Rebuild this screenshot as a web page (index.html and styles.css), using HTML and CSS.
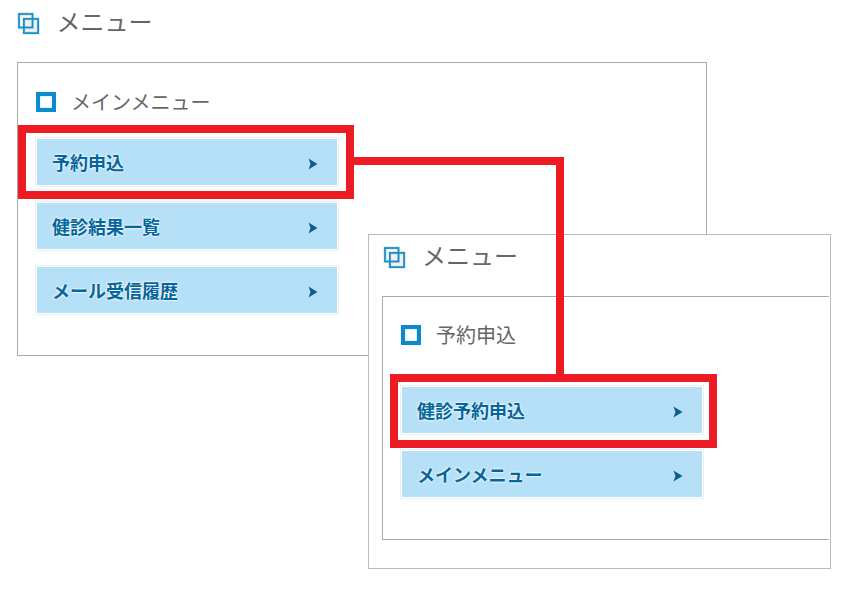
FILE: index.html
```html
<!DOCTYPE html>
<html lang="ja">
<head>
<meta charset="utf-8">
<title>メニュー</title>
<link rel="stylesheet" href="styles.css">
</head>
<body>
<svg class="sprites" width="0" height="0" aria-hidden="true">
  <symbol id="windows" viewBox="0 0 24 24">
    <path d="M7 7H21V21H7z" fill="#e8e8e8" opacity=".6"/>
    <rect x="2" y="2" width="13.5" height="13.5" fill="none" stroke="#dedede" stroke-width="3.2"/>
    <rect x="6.9" y="6.9" width="14.2" height="14.2" fill="none" stroke="#dedede" stroke-width="3.2"/>
    <rect x="2" y="2" width="13.5" height="13.5" fill="none" stroke="#0d8fce" stroke-width="1.7"/>
    <rect x="6.9" y="6.9" width="14.2" height="14.2" fill="none" stroke="#0d8fce" stroke-width="1.7"/>
  </symbol>
  <symbol id="arrow" viewBox="0 0 10 12">
    <path d="M.5 .5 9.5 6 .5 11.5 2.5 6z" fill="#0b5f8c"/>
  </symbol>
</svg>

<section class="window window-main">
  <header class="window-title">
    <svg class="title-icon"><use href="#windows"/></svg>
    <h1>メニュー</h1>
  </header>
  <div class="panel panel-main">
    <h2 class="panel-title"><span class="square"></span>メインメニュー</h2>
    <ul class="menu">
      <li><a class="menu-item">予約申込<svg class="arrow"><use href="#arrow"/></svg></a></li>
      <li><a class="menu-item">健診結果一覧<svg class="arrow"><use href="#arrow"/></svg></a></li>
      <li><a class="menu-item">メール受信履歴<svg class="arrow"><use href="#arrow"/></svg></a></li>
    </ul>
  </div>
</section>

<section class="window window-sub">
  <header class="window-title">
    <svg class="title-icon"><use href="#windows"/></svg>
    <h1>メニュー</h1>
  </header>
  <div class="panel panel-sub">
    <h2 class="panel-title"><span class="square"></span>予約申込</h2>
    <ul class="menu">
      <li><a class="menu-item">健診予約申込<svg class="arrow"><use href="#arrow"/></svg></a></li>
      <li><a class="menu-item">メインメニュー<svg class="arrow"><use href="#arrow"/></svg></a></li>
    </ul>
  </div>
</section>

<div class="mark mark-one"></div>
<div class="mark mark-two"></div>
<div class="link link-h"></div>
<div class="link link-v"></div>
</body>
</html>
```
FILE: styles.css
```css
* { box-sizing: border-box; }
html, body { margin: 0; padding: 0; }
body {
  position: relative;
  width: 857px;
  height: 591px;
  overflow: hidden;
  background: #fff;
  font-family: "Noto Sans CJK JP", "Noto Sans", sans-serif;
  color: #666;
}
.sprites { position: absolute; }

.window { position: absolute; background: #fff; }
.window-main { left: 0; top: 0; width: 707px; height: 356px; }
.window-sub {
  left: 368px; top: 234px; width: 463px; height: 335px;
  border: 1px solid #bbb;
}

.window-title { display: flex; align-items: center; height: 48px; }
.window-main .window-title { padding-left: 17px; }
.window-sub .window-title { height: 45px; padding-left: 14px; }
.title-icon { width: 24px; height: 24px; flex: none; }
h1 {
  margin: 0 0 0 15.5px;
  padding-bottom: 6px;
  font-size: 24px;
  font-weight: 400;
  line-height: 1;
  color: #666;
}
.window-sub h1 { margin-left: 15px; }

.panel { background: #fff; border: 1px solid #aaa; }
.panel-main { margin-left: 17px; margin-top: 14px; height: 294px; padding: 18px 18px 0; }
.panel-sub {
  margin-left: 13px; margin-top: 16px; height: 244px; width: 447px;
  border-right: 0; padding: 17px 18px 0;
}

.panel-title {
  display: flex; align-items: center;
  height: 42px; margin: 0 0 15px;
  font-size: 20px; font-weight: 400; line-height: 1; color: #666;
}
.panel-sub .panel-title { margin-bottom: 30px; }
.square {
  width: 20px; height: 20px; margin-right: 15px; flex: none;
  border: 4px solid #0a8bd0; background: #fff;
  box-shadow: inset 0 0 2px #9fd3ee;
}

.menu { list-style: none; margin: 0; padding: 0; display: flex; flex-direction: column; gap: 16px; }
.menu-item {
  display: flex; align-items: center; justify-content: space-between;
  width: 302px; height: 48px;
  padding: 0 19px 0 15px;
  background: #b5e0f7;
  border: 1px solid #fff;
  box-shadow: 0 0 0 1px #ecf0f2;
  font-size: 18px; font-weight: 700; line-height: 1;
  color: #05669c;
  text-shadow: 0 0 3px #fff, 0 0 2px #fff;
}
.arrow { width: 10px; height: 12px; flex: none; margin-top: 4px; }

.mark { position: absolute; border: 8px solid #ed1c24; }
.mark-one { left: 18px; top: 125px; width: 336px; height: 74px; }
.mark-two { left: 390px; top: 374px; width: 327px; height: 74px; }
.link { position: absolute; background: #ed1c24; }
.link-h { left: 354px; top: 157px; width: 210px; height: 8px; }
.link-v { left: 556px; top: 157px; width: 8px; height: 218px; }
```
